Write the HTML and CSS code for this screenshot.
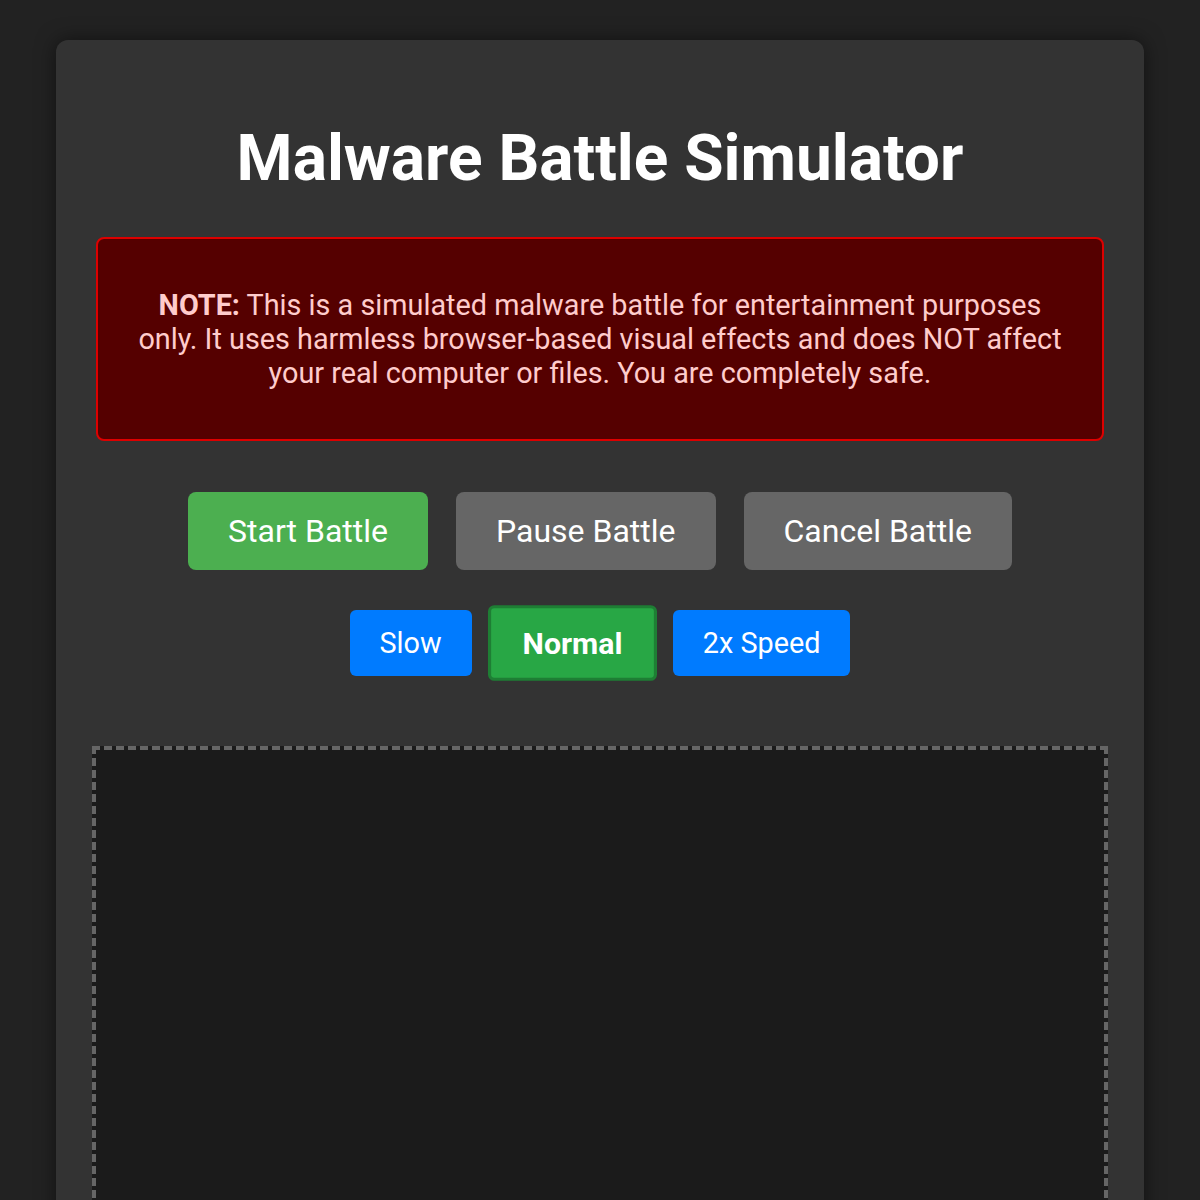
FILE: index.html
```html
<!DOCTYPE html>
<html lang="en">
<head>
<meta charset="utf-8">
<title>Malware Battle Simulator</title>
<link rel="stylesheet" href="styles.css">
</head>
<body>
  <main class="simulator">
    <h1 class="title">Malware Battle Simulator</h1>

    <div class="notice">
      <p><strong>NOTE:</strong> This is a simulated malware battle for entertainment purposes only. It uses harmless browser-based visual effects and does NOT affect your real computer or files. You are completely safe.</p>
    </div>

    <div class="controls">
      <button class="btn btn-start">Start Battle</button>
      <button class="btn btn-muted">Pause Battle</button>
      <button class="btn btn-muted">Cancel Battle</button>
    </div>

    <div class="speeds">
      <button class="speed">Slow</button>
      <button class="speed speed-active">Normal</button>
      <button class="speed">2x Speed</button>
    </div>

    <div class="arena"></div>
  </main>
</body>
</html>
```

FILE: styles.css
```css
* {
  font-family: Roboto, "Noto Sans", Arial, sans-serif;
}

html, body {
  margin: 0;
  background: #222222;
}

body {
  padding: 40px 56px;
  height: 1200px;
  box-sizing: border-box;
  overflow: hidden;
}

.simulator {
  background: #333333;
  border-radius: 12px;
  box-shadow: 0 0 20px rgba(0, 0, 0, 0.5);
  padding: 40px;
  display: flex;
  flex-direction: column;
  align-items: center;
  color: #ffffff;
}

.title {
  font-size: 64px;
  font-weight: 700;
  margin: 41px 0;
  text-align: center;
}

.notice {
  align-self: stretch;
  background: #550000;
  border: 2px solid #dd0000;
  border-radius: 8px;
  padding: 20px 30px;
  color: #ffcccc;
  text-align: center;
  font-size: 28.8px;
}

.notice p {
  margin: 1em 0;
}

.controls {
  display: flex;
  gap: 28px;
  margin-top: 51px;
}

.btn {
  font-size: 32px;
  color: #ffffff;
  border: none;
  border-radius: 8px;
  padding: 20px 40px;
  cursor: pointer;
}

.btn-start {
  background: #4caf50;
}

.btn-muted {
  background: #666666;
}

.speeds {
  display: flex;
  align-items: center;
  gap: 20px;
  margin-top: 37px;
}

.speed {
  font-size: 28.8px;
  color: #ffffff;
  background: #007bff;
  border: none;
  border-radius: 6px;
  padding: 16px 30px;
  cursor: pointer;
}

.speed-active {
  background: #28a745;
  border: 3px solid #1e7e34;
  font-weight: 700;
  transform: scale(1.05);
}

.arena {
  width: 100%;
  height: 600px;
  margin-top: 67px;
  background: #1b1b1b;
  border: 4px dashed #666666;
  flex-shrink: 0;
}
```
